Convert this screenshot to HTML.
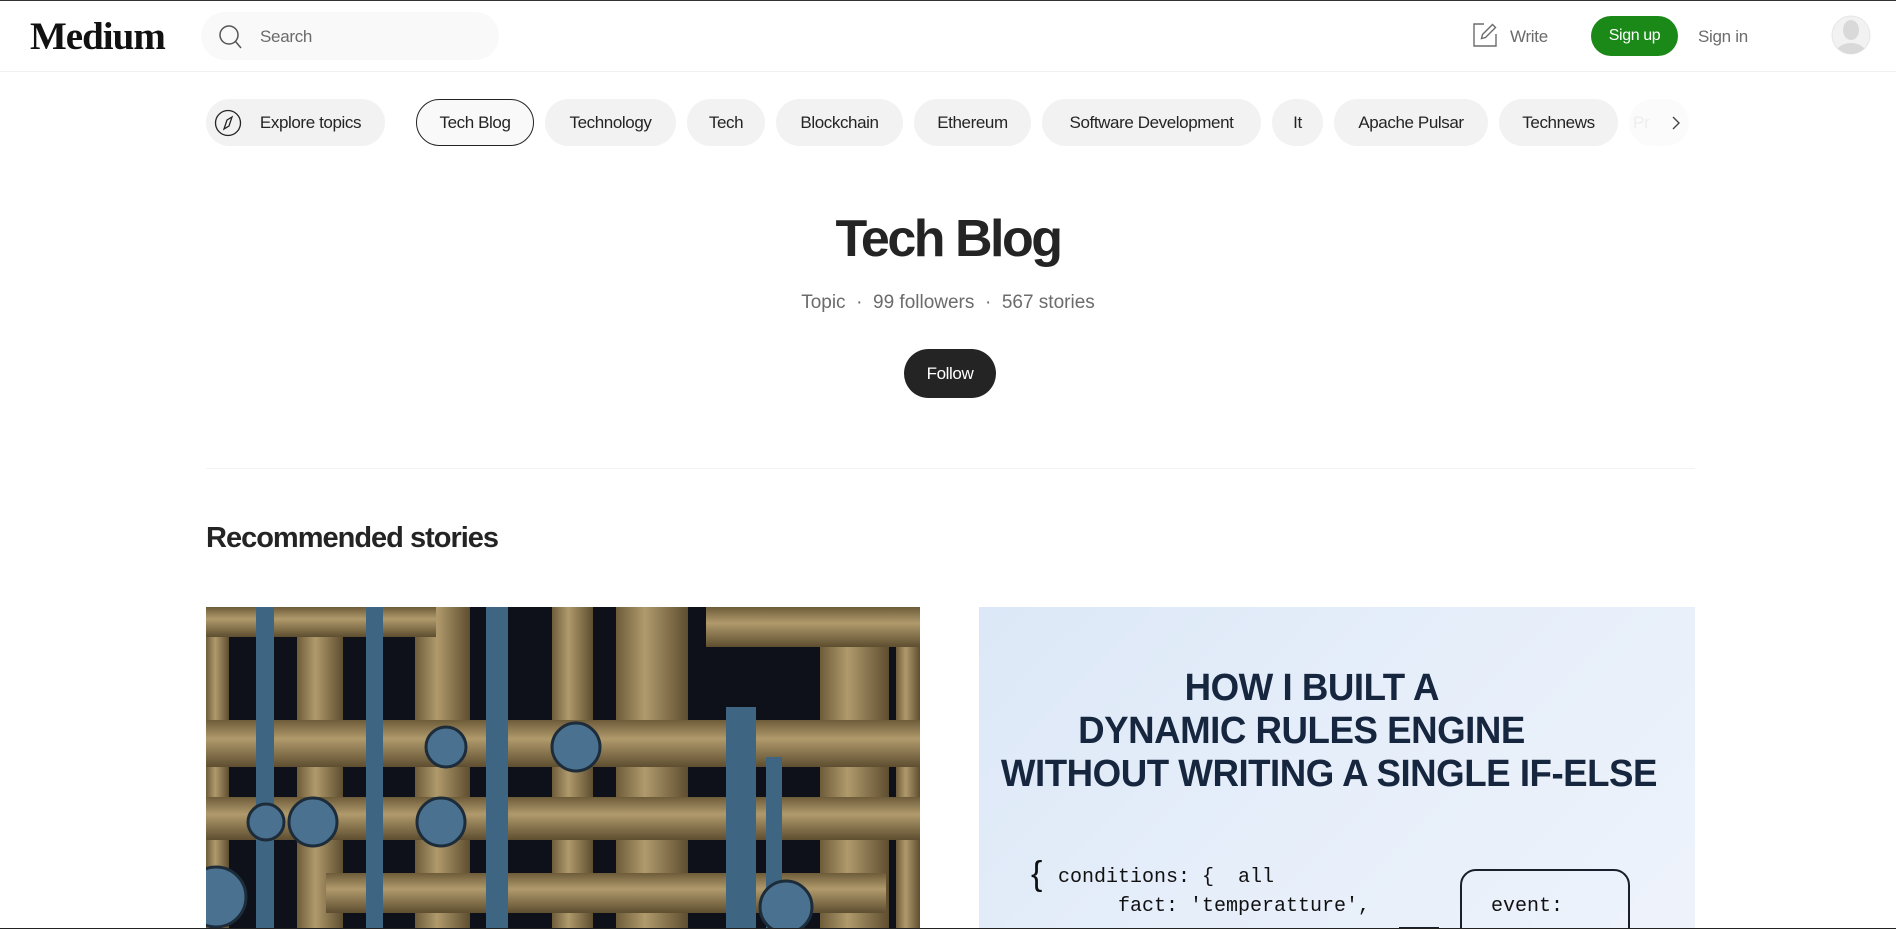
<!DOCTYPE html>
<html><head><meta charset="utf-8"><style>
*{margin:0;padding:0;box-sizing:border-box}
body{width:1896px;height:929px;overflow:hidden;background:#fff;font-family:"Liberation Sans",sans-serif;color:#242424;position:relative}
.abs{position:absolute}
.pill{position:absolute;top:99px;height:47px;border-radius:24px;background:#f2f2f2;display:flex;align-items:center;justify-content:center;font-size:17px;letter-spacing:-0.4px;color:#242424;white-space:nowrap}
.hl{position:absolute;left:0;width:100%;text-align:center;font-weight:bold;color:#15263e;font-size:38px;letter-spacing:-0.5px}
.hl span{display:inline-block;transform:scaleX(0.965)}
.code{position:absolute;font-family:"Liberation Mono",monospace;font-size:20px;color:#111;white-space:pre}
</style></head><body>
<div class="abs" style="left:0;top:0;width:1896px;height:1px;background:#333"></div>
<div class="abs" style="left:0;top:71px;width:1896px;height:1px;background:#f0f0f0"></div>
<div class="abs" style="left:30px;top:14px;font-family:'Liberation Serif',serif;font-weight:bold;font-size:39px;letter-spacing:-1px;color:#111">Medium</div>
<div class="abs" style="left:201px;top:12px;width:298px;height:48px;border-radius:24px;background:#f9f9f9"></div>
<svg class="abs" style="left:216px;top:23px" width="28" height="28" viewBox="0 0 28 28"><circle cx="13" cy="12" r="9" fill="none" stroke="#555" stroke-width="1.5"/><path d="M19.5 18.5 L25 25" stroke="#555" stroke-width="1.5"/></svg>
<div class="abs" style="left:260px;top:27px;font-size:17px;color:#6b6b6b;letter-spacing:-0.3px">Search</div>
<svg class="abs" style="left:1472px;top:22px" width="26" height="26" viewBox="0 0 26 26"><path d="M12 2H2v22h22V12" fill="none" stroke="#6b6b6b" stroke-width="1.4"/><path d="M20.5 2.5l3 3-10 10-4 1 1-4z" fill="none" stroke="#6b6b6b" stroke-width="1.4"/></svg>
<div class="abs" style="left:1510px;top:27px;font-size:17px;color:#6b6b6b;letter-spacing:-0.3px">Write</div>
<div class="abs" style="left:1591px;top:16px;width:87px;height:40px;border-radius:20px;background:#1a8917;color:#fff;font-size:16px;display:flex;align-items:center;justify-content:center;letter-spacing:-0.4px">Sign up</div>
<div class="abs" style="left:1698px;top:27px;font-size:17px;color:#6b6b6b;letter-spacing:-0.3px">Sign in</div>
<svg class="abs" style="left:1831px;top:15px" width="40" height="40" viewBox="0 0 40 40"><defs><clipPath id="c"><circle cx="20" cy="20" r="19"/></clipPath></defs><circle cx="20" cy="20" r="19" fill="#f2f2f2" stroke="#e6e6e6"/><g clip-path="url(#c)" fill="#d9d9d9"><ellipse cx="20" cy="15" rx="8" ry="10"/><ellipse cx="20" cy="40" rx="16" ry="12"/></g></svg>

<div class="pill" style="left:206px;width:179px;padding-left:30px">Explore topics</div>
<svg class="abs" style="left:214px;top:109px" width="28" height="28" viewBox="0 0 28 28"><circle cx="14" cy="14" r="12.5" fill="none" stroke="#242424" stroke-width="1.3"/><path d="M18 8l-5 3-3 9 5-3z" fill="none" stroke="#242424" stroke-width="1.3"/></svg>
<div class="pill" style="left:416px;width:118px;background:#f9f9f9;border:1px solid #242424">Tech Blog</div>
<div class="pill" style="left:545px;width:131px">Technology</div>
<div class="pill" style="left:687px;width:78px">Tech</div>
<div class="pill" style="left:776px;width:127px">Blockchain</div>
<div class="pill" style="left:914px;width:117px">Ethereum</div>
<div class="pill" style="left:1042px;width:219px">Software Development</div>
<div class="pill" style="left:1272px;width:51px">It</div>
<div class="pill" style="left:1334px;width:154px">Apache Pulsar</div>
<div class="pill" style="left:1499px;width:119px">Technews</div>
<div class="pill" style="left:1629px;width:60px;background:#fbfbfb;color:#eee;justify-content:flex-start;padding-left:4px">Pr</div>
<svg class="abs" style="left:1668px;top:114px" width="16" height="18" viewBox="0 0 16 18"><path d="M5 3l6 6-6 6" fill="none" stroke="#444" stroke-width="1.4"/></svg>

<div class="abs" style="left:0;width:1896px;top:209px;text-align:center;font-size:52px;font-weight:bold;letter-spacing:-2.5px;color:#242424">Tech Blog</div>
<div class="abs" style="left:0;width:1896px;top:292px;text-align:center;font-size:19px;color:#6b6b6b;letter-spacing:0px">Topic &nbsp;·&nbsp; 99 followers &nbsp;·&nbsp; 567 stories</div>
<div class="abs" style="left:904px;top:349px;width:92px;height:49px;border-radius:25px;background:#242424;color:#fff;font-size:17px;display:flex;align-items:center;justify-content:center;letter-spacing:-0.4px">Follow</div>
<div class="abs" style="left:206px;top:468px;width:1489px;height:1px;background:#f2f2f2"></div>
<div class="abs" style="left:206px;top:522px;font-size:29px;font-weight:bold;letter-spacing:-1px;color:#242424">Recommended stories</div>

<svg class="abs" style="left:206px;top:607px" width="714" height="322" viewBox="0 0 714 322">
<rect width="714" height="322" fill="#0e1119"/>
<defs><linearGradient id="p" x1="0" x2="1"><stop offset="0" stop-color="#6e5c3a"/><stop offset="0.4" stop-color="#b09a6c"/><stop offset="1" stop-color="#5e4e30"/></linearGradient>
<linearGradient id="h" x1="0" y1="0" x2="0" y2="1"><stop offset="0" stop-color="#6e5c3a"/><stop offset="0.4" stop-color="#b09a6c"/><stop offset="1" stop-color="#5e4e30"/></linearGradient></defs>
<g fill="url(#p)"><rect x="0" y="0" width="23" height="322"/><rect x="91" y="0" width="46" height="322"/><rect x="209" y="0" width="55" height="322"/><rect x="346" y="0" width="41" height="322"/><rect x="410" y="0" width="72" height="322"/><rect x="614" y="0" width="69" height="322"/><rect x="690" y="0" width="24" height="322"/></g>
<g fill="url(#h)"><rect x="0" y="113" width="714" height="47"/><rect x="0" y="190" width="714" height="43"/><rect x="120" y="266" width="560" height="40"/><rect x="0" y="0" width="230" height="30"/><rect x="500" y="0" width="214" height="40"/></g>
<g fill="#3e6683"><rect x="50" y="0" width="18" height="322"/><rect x="160" y="0" width="17" height="322"/><rect x="280" y="0" width="22" height="322"/><rect x="520" y="100" width="30" height="222"/><rect x="560" y="150" width="16" height="172"/></g>
<g fill="#4a7290" stroke="#1d2c3a" stroke-width="3"><circle cx="107" cy="215" r="24"/><circle cx="235" cy="215" r="24"/><circle cx="370" cy="140" r="24"/><circle cx="240" cy="140" r="20"/><circle cx="580" cy="300" r="26"/><circle cx="60" cy="215" r="18"/><circle cx="10" cy="290" r="30"/></g>
</svg>

<div class="abs" style="left:979px;top:607px;width:716px;height:322px;overflow:hidden;background:linear-gradient(135deg,#dce8f7 0%,#e6eefa 50%,#eef3fb 100%)">
<div class="hl" style="top:60px;left:-25px"><span>HOW I BUILT A</span></div>
<div class="hl" style="top:103px;left:-36px"><span>DYNAMIC RULES ENGINE</span></div>
<div class="hl" style="top:146px;left:-8px"><span>WITHOUT WRITING A SINGLE IF-ELSE</span></div>
<div class="code" style="left:52px;top:248px;font-size:34px;font-family:'Liberation Sans',sans-serif;font-weight:300">{</div>
<div class="code" style="left:79px;top:259px">conditions: {  all</div>
<div class="code" style="left:139px;top:288px">fact: 'temperatture',</div>
<div class="abs" style="left:481px;top:262px;width:170px;height:90px;border:2.5px solid #1a1f2b;border-radius:16px"></div>
<div class="code" style="left:512px;top:288px">event:</div>
<div class="abs" style="left:420px;top:320px;width:40px;height:2px;background:#1a1f2b"></div>
</div>
<div class="abs" style="left:0;top:928px;width:1896px;height:1px;background:#222"></div>
</body></html>
